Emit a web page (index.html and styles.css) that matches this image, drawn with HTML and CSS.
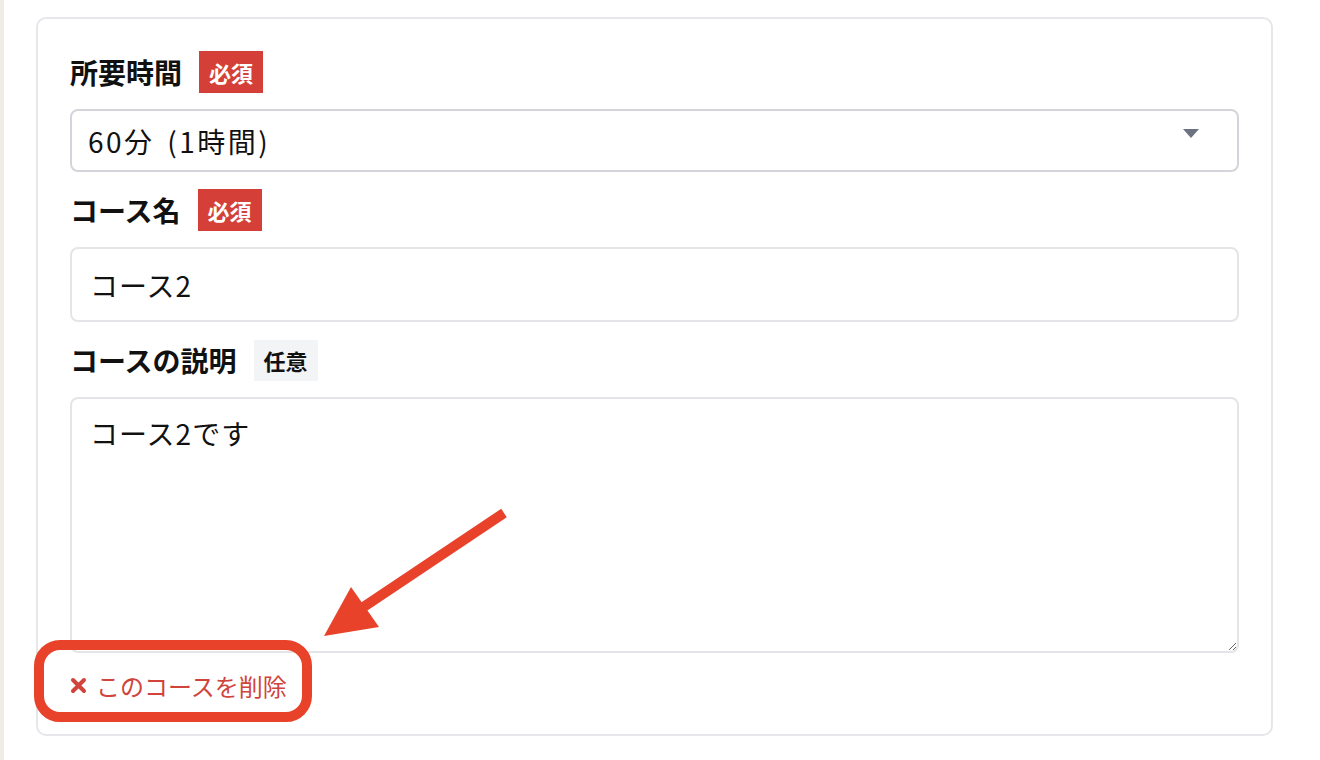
FILE: index.html
```html
<!DOCTYPE html>
<html lang="ja">
<head>
  <meta charset="UTF-8">
  <title>コース編集</title>
  <link rel="stylesheet" href="styles.css">
</head>
<body>
  <div class="page">
    <div class="course-card">
      <div class="field">
        <div class="field-label">
          <span class="label-text">所要時間</span>
          <span class="badge badge-required">必須</span>
        </div>
        <div class="select-wrap">
          <select class="control select-control">
            <option>60分 (1時間)</option>
          </select>
        </div>
      </div>

      <div class="field">
        <div class="field-label">
          <span class="label-text">コース名</span>
          <span class="badge badge-required">必須</span>
        </div>
        <input type="text" class="control input-control" value="コース2">
      </div>

      <div class="field">
        <div class="field-label">
          <span class="label-text">コースの説明</span>
          <span class="badge badge-optional">任意</span>
        </div>
        <textarea class="control textarea-control">コース2です</textarea>
      </div>

      <a href="#" class="delete-link">
        <svg class="delete-icon" width="17" height="17" viewBox="0 0 17 17">
          <path d="M3 3 L14 14 M14 3 L3 14" stroke="currentColor" stroke-width="4" stroke-linecap="round"/>
        </svg>
        このコースを削除
      </a>
    </div>
  </div>

  <!-- annotation drawn over the screenshot -->
  <svg class="annotation" width="1320" height="760" viewBox="0 0 1320 760">
    <rect x="39" y="645" width="268" height="72" rx="21" ry="21" fill="none" stroke="#e8422a" stroke-width="10"/>
    <line x1="504" y1="513" x2="362" y2="608" stroke="#e8422a" stroke-width="10"/>
    <polygon points="324,636 351,587 379,627" fill="#e8422a"/>
  </svg>
</body>
</html>
```

FILE: styles.css
```css
body {
  margin: 0;
  background-color: #fff;
  border-left: 4px solid #efebe5;
  min-height: 760px;
  box-sizing: border-box;
  font-family: "Noto Sans CJK JP", "Noto Sans", sans-serif;
  color: #111;
}
.page {
  padding: 17px 0 0 32px;
}
.course-card {
  width: 1237px;
  box-sizing: border-box;
  border: 2px solid #e5e7eb;
  border-radius: 10px;
  padding: 32px 32px 33px 32px;
}
.field {
  margin-bottom: 17px;
}
.field-label {
  display: flex;
  align-items: center;
  height: 42px;
  margin-bottom: 16px;
}
.label-text {
  font-size: 28px;
  font-weight: bold;
  color: #111;
}
.badge {
  margin-left: 17px;
  height: 42px;
  line-height: 42px;
  padding: 0 10px;
  font-size: 22px;
  font-weight: bold;
}
.badge-required {
  background-color: #d43f38;
  color: #fff;
}
.badge-optional {
  background-color: #f3f4f6;
  color: #111;
  height: 41px;
  line-height: 41px;
}
.control {
  display: block;
  width: 100%;
  box-sizing: border-box;
  font-family: "Noto Sans CJK JP", "Noto Sans", sans-serif;
  font-size: 28px;
  letter-spacing: 1px;
  color: #111;
  background-color: #fff;
  border: 2px solid #e4e5e9;
  border-radius: 8px;
  outline: none;
}
.select-wrap {
  position: relative;
}
.select-wrap::after {
  content: "";
  position: absolute;
  right: 40px;
  top: 20px;
  border-left: 8px solid transparent;
  border-right: 8px solid transparent;
  border-top: 9px solid #6b7280;
}
.select-control {
  appearance: none;
  -webkit-appearance: none;
  height: 63px;
  padding: 0 60px 0 16px;
  letter-spacing: 2.5px;
  word-spacing: 4px;
  border-color: #d3d5da;
}
.input-control {
  height: 75px;
  padding: 0 18px;
}
.textarea-control {
  height: 256px;
  padding: 14px 18px;
  resize: vertical;
}
.field:nth-of-type(3) {
  margin-bottom: 16px;
}
.delete-link {
  display: inline-flex;
  align-items: center;
  height: 32px;
  font-size: 24px;
  color: #d0443c;
  text-decoration: none;
}
.delete-icon {
  margin-right: 9px;
  color: #d0443c;
}
.annotation {
  position: absolute;
  left: 0;
  top: 0;
  pointer-events: none;
}
```
